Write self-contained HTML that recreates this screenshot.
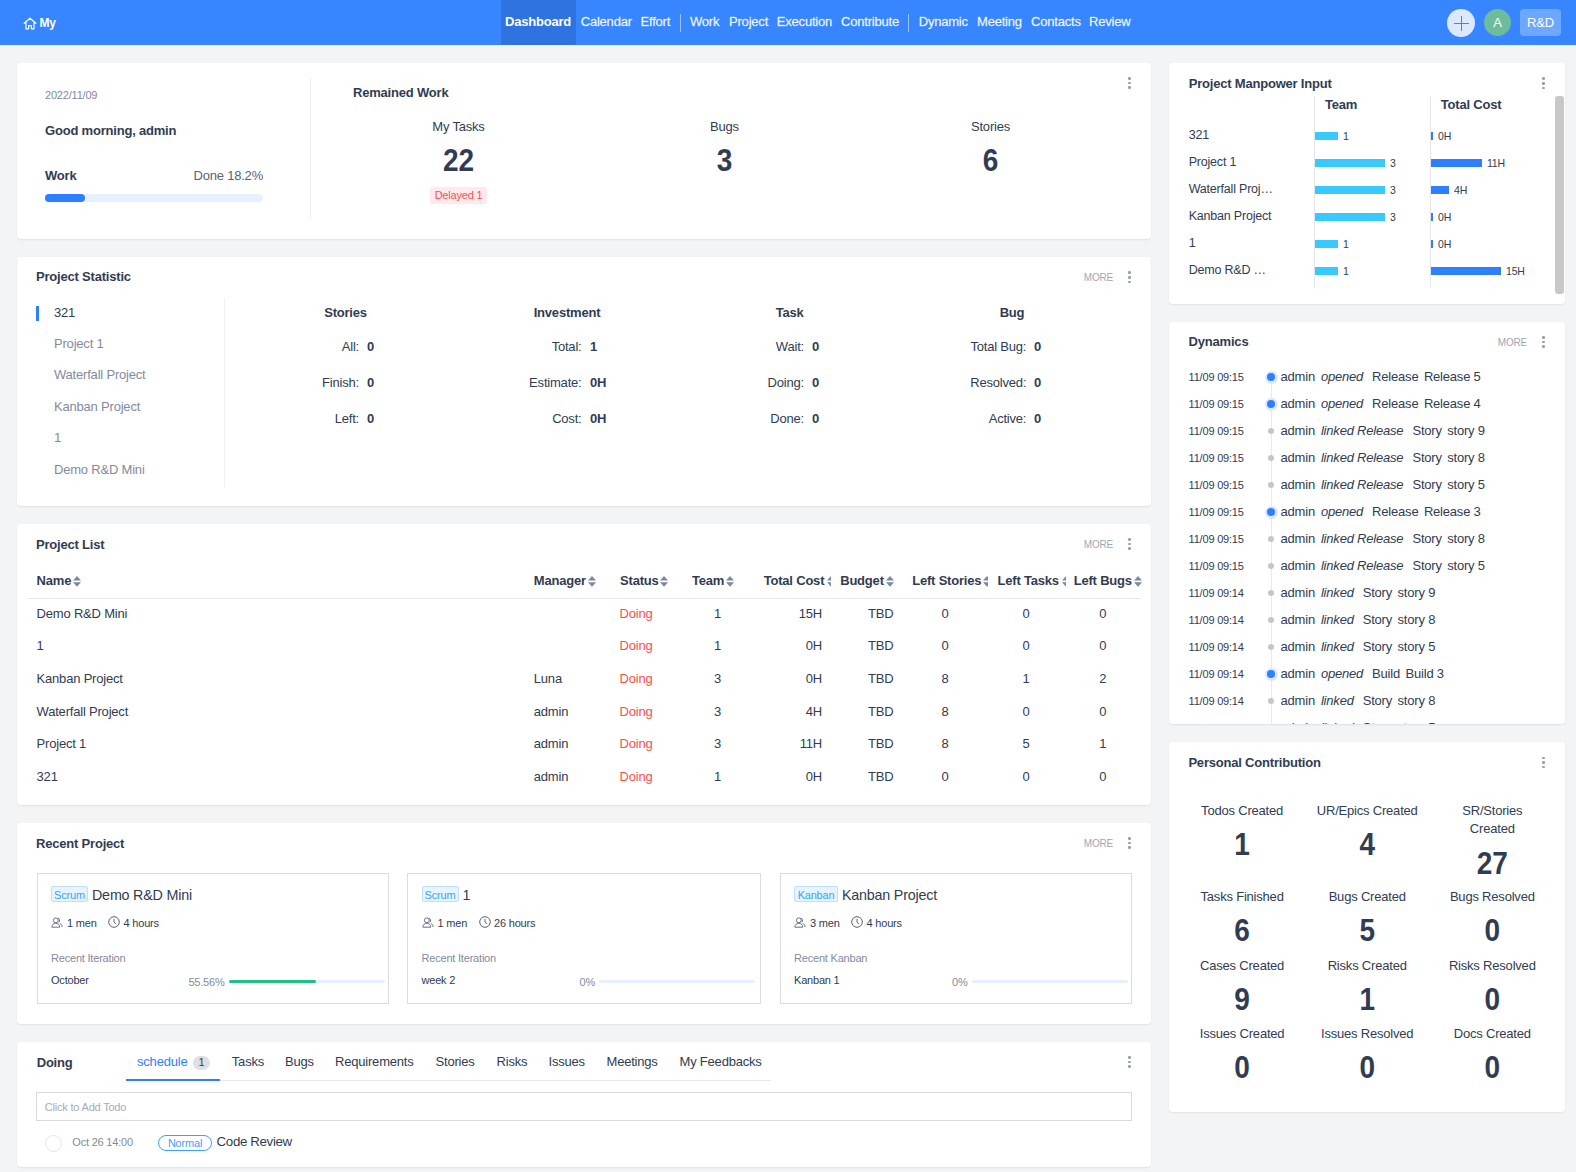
<!DOCTYPE html>
<html><head><meta charset="utf-8"><title>Dashboard</title>
<style>
html,body{margin:0;padding:0;}
body{width:1576px;height:1172px;overflow:hidden;position:relative;background:#f3f4f6;font-family:"Liberation Sans",sans-serif;color:#313c52;letter-spacing:-0.2px;}
.big{letter-spacing:0;transform:scaleY(1.1);}
.a{position:absolute;white-space:nowrap;}
i{font-style:italic;}
</style></head><body>
<div class="a" style="left:0px;top:0px;width:1576px;height:45px;background:#3785ff;"></div>
<div class="a" style="left:501px;top:0px;width:75px;height:45px;background:#2f73e0;"></div>
<svg class="a" style="left:23px;top:17px" width="14" height="13" viewBox="0 0 14 13"><path d="M1.2 6.3 L7 1.2 L12.8 6.3 M3 5 V11.8 H5.6 V8.6 H8.4 V11.8 H11 V5" fill="none" stroke="#fff" stroke-width="1.2" stroke-linejoin="round" stroke-linecap="round"/></svg>
<div class="a" style="top:12.84px;font-size:12px;line-height:20px;color:#fff;font-weight:700;left:39.5px;">My</div>
<div class="a" style="top:11.50px;font-size:13px;line-height:20px;color:#fff;font-weight:700;left:505px;">Dashboard</div>
<div class="a" style="top:11.50px;font-size:13px;line-height:20px;color:#f0f5ff;left:580.7px;-webkit-text-stroke:0.3px rgba(240,245,255,.7);">Calendar</div>
<div class="a" style="top:11.50px;font-size:13px;line-height:20px;color:#f0f5ff;left:640.5px;-webkit-text-stroke:0.3px rgba(240,245,255,.7);">Effort</div>
<div class="a" style="top:11.50px;font-size:13px;line-height:20px;color:#f0f5ff;left:690px;-webkit-text-stroke:0.3px rgba(240,245,255,.7);">Work</div>
<div class="a" style="top:11.50px;font-size:13px;line-height:20px;color:#f0f5ff;left:729px;-webkit-text-stroke:0.3px rgba(240,245,255,.7);">Project</div>
<div class="a" style="top:11.50px;font-size:13px;line-height:20px;color:#f0f5ff;left:776.8px;-webkit-text-stroke:0.3px rgba(240,245,255,.7);">Execution</div>
<div class="a" style="top:11.50px;font-size:13px;line-height:20px;color:#f0f5ff;left:841px;-webkit-text-stroke:0.3px rgba(240,245,255,.7);">Contribute</div>
<div class="a" style="top:11.50px;font-size:13px;line-height:20px;color:#f0f5ff;left:918.7px;-webkit-text-stroke:0.3px rgba(240,245,255,.7);">Dynamic</div>
<div class="a" style="top:11.50px;font-size:13px;line-height:20px;color:#f0f5ff;left:977px;-webkit-text-stroke:0.3px rgba(240,245,255,.7);">Meeting</div>
<div class="a" style="top:11.50px;font-size:13px;line-height:20px;color:#f0f5ff;left:1031px;-webkit-text-stroke:0.3px rgba(240,245,255,.7);">Contacts</div>
<div class="a" style="top:11.50px;font-size:13px;line-height:20px;color:#f0f5ff;left:1089px;-webkit-text-stroke:0.3px rgba(240,245,255,.7);">Review</div>
<div class="a" style="left:680px;top:14px;width:1px;height:18px;background:rgba(255,255,255,.5);"></div>
<div class="a" style="left:908px;top:14px;width:1px;height:18px;background:rgba(255,255,255,.5);"></div>
<div class="a" style="left:1447px;top:9px;width:28px;height:28px;background:#dbe8ff;border-radius:50%;"></div>
<div class="a" style="left:1454px;top:22.5px;width:14.5px;height:1.2px;background:#3785ff;"></div>
<div class="a" style="left:1460.6px;top:16px;width:1.2px;height:14.5px;background:#3785ff;"></div>
<div class="a" style="left:1484px;top:9px;width:27px;height:27px;background:#6dbc9b;border-radius:50%;"></div>
<div class="a" style="top:12.50px;font-size:13px;line-height:20px;color:#fff;left:1197.5px;width:600px;text-align:center;">A</div>
<div class="a" style="left:1520px;top:9px;width:41px;height:27px;background:rgba(255,255,255,.28);border-radius:4px;"></div>
<div class="a" style="top:12.50px;font-size:13px;line-height:20px;color:#fff;left:1240.5px;width:600px;text-align:center;">R&amp;D</div>
<div class="a" style="left:17px;top:63px;width:1134px;height:176px;background:#fff;border-radius:4px;box-shadow:0 1px 2px rgba(0,0,0,.08);"></div>
<div class="a" style="top:85.19px;font-size:11px;line-height:20px;color:#838a9d;left:45px;">2022/11/09</div>
<div class="a" style="top:120.50px;font-size:13px;line-height:20px;color:#313c52;font-weight:700;left:45px;">Good morning, admin</div>
<div class="a" style="top:165.50px;font-size:13px;line-height:20px;color:#313c52;font-weight:700;left:45px;">Work</div>
<div class="a" style="top:165.50px;font-size:13px;line-height:20px;color:#5a6275;left:-337px;width:600px;text-align:right;">Done 18.2%</div>
<div class="a" style="left:45px;top:194px;width:218px;height:8px;background:#e6f0ff;border-radius:4px;"></div>
<div class="a" style="left:45px;top:194px;width:40px;height:8px;background:#2e7fff;border-radius:4px;"></div>
<div class="a" style="left:310px;top:78px;width:1px;height:142px;background:#eceef2;"></div>
<div class="a" style="top:82.50px;font-size:13px;line-height:20px;color:#313c52;font-weight:700;left:353px;">Remained Work</div>
<div class="a" style="left:1128.25px;top:77.15px;width:2.5px;height:2.5px;background:#979eb0;border-radius:50%;"></div>
<div class="a" style="left:1128.25px;top:81.75px;width:2.5px;height:2.5px;background:#979eb0;border-radius:50%;"></div>
<div class="a" style="left:1128.25px;top:86.35px;width:2.5px;height:2.5px;background:#979eb0;border-radius:50%;"></div>
<div class="a" style="top:116.50px;font-size:13px;line-height:20px;color:#313c52;left:158.5px;width:600px;text-align:center;">My Tasks</div>
<div class="a" style="top:151.30px;font-size:28px;line-height:20px;color:#313c52;font-weight:700;left:158.5px;width:600px;text-align:center;letter-spacing:0;transform:scaleY(1.1);">22</div>
<div class="a" style="top:116.50px;font-size:13px;line-height:20px;color:#313c52;left:424.5px;width:600px;text-align:center;">Bugs</div>
<div class="a" style="top:151.30px;font-size:28px;line-height:20px;color:#313c52;font-weight:700;left:424.5px;width:600px;text-align:center;letter-spacing:0;transform:scaleY(1.1);">3</div>
<div class="a" style="top:116.50px;font-size:13px;line-height:20px;color:#313c52;left:690.5px;width:600px;text-align:center;">Stories</div>
<div class="a" style="top:151.30px;font-size:28px;line-height:20px;color:#313c52;font-weight:700;left:690.5px;width:600px;text-align:center;letter-spacing:0;transform:scaleY(1.1);">6</div>
<div class="a" style="left:430px;top:187px;width:57px;height:17px;background:#ffe9ec;border-radius:2px;"></div>
<div class="a" style="top:185.19px;font-size:11px;line-height:20px;color:#ff4d4f;left:158.5px;width:600px;text-align:center;">Delayed 1</div>
<div class="a" style="left:17px;top:257px;width:1134px;height:249px;background:#fff;border-radius:4px;box-shadow:0 1px 2px rgba(0,0,0,.08);"></div>
<div class="a" style="top:266.50px;font-size:13px;line-height:20px;color:#313c52;font-weight:700;left:36px;">Project Statistic</div>
<div class="a" style="top:267.54px;font-size:10px;line-height:20px;color:#9ea6b8;left:513px;width:600px;text-align:right;">MORE</div>
<div class="a" style="left:1128.25px;top:271.45px;width:2.5px;height:2.5px;background:#979eb0;border-radius:50%;"></div>
<div class="a" style="left:1128.25px;top:276.05px;width:2.5px;height:2.5px;background:#979eb0;border-radius:50%;"></div>
<div class="a" style="left:1128.25px;top:280.65000000000003px;width:2.5px;height:2.5px;background:#979eb0;border-radius:50%;"></div>
<div class="a" style="left:36px;top:306px;width:3px;height:15px;background:#2e7fff;"></div>
<div class="a" style="top:302.50px;font-size:13px;line-height:20px;color:#313c52;left:54px;">321</div>
<div class="a" style="top:333.95px;font-size:13px;line-height:20px;color:#838a9d;left:54px;">Project 1</div>
<div class="a" style="top:365.40px;font-size:13px;line-height:20px;color:#838a9d;left:54px;">Waterfall Project</div>
<div class="a" style="top:396.85px;font-size:13px;line-height:20px;color:#838a9d;left:54px;">Kanban Project</div>
<div class="a" style="top:428.30px;font-size:13px;line-height:20px;color:#838a9d;left:54px;">1</div>
<div class="a" style="top:459.75px;font-size:13px;line-height:20px;color:#838a9d;left:54px;">Demo R&amp;D Mini</div>
<div class="a" style="left:224px;top:298px;width:1px;height:189px;background:#eef0f5;"></div>
<div class="a" style="top:302.50px;font-size:13px;line-height:20px;color:#313c52;font-weight:700;left:45.5px;width:600px;text-align:center;">Stories</div>
<div class="a" style="top:336.50px;font-size:13px;line-height:20px;color:#313c52;left:-241px;width:600px;text-align:right;">All:</div>
<div class="a" style="top:336.50px;font-size:13px;line-height:20px;color:#313c52;font-weight:700;left:367px;">0</div>
<div class="a" style="top:372.50px;font-size:13px;line-height:20px;color:#313c52;left:-241px;width:600px;text-align:right;">Finish:</div>
<div class="a" style="top:372.50px;font-size:13px;line-height:20px;color:#313c52;font-weight:700;left:367px;">0</div>
<div class="a" style="top:408.50px;font-size:13px;line-height:20px;color:#313c52;left:-241px;width:600px;text-align:right;">Left:</div>
<div class="a" style="top:408.50px;font-size:13px;line-height:20px;color:#313c52;font-weight:700;left:367px;">0</div>
<div class="a" style="top:302.50px;font-size:13px;line-height:20px;color:#313c52;font-weight:700;left:267px;width:600px;text-align:center;">Investment</div>
<div class="a" style="top:336.50px;font-size:13px;line-height:20px;color:#313c52;left:-18.5px;width:600px;text-align:right;">Total:</div>
<div class="a" style="top:336.50px;font-size:13px;line-height:20px;color:#313c52;font-weight:700;left:590px;">1</div>
<div class="a" style="top:372.50px;font-size:13px;line-height:20px;color:#313c52;left:-18.5px;width:600px;text-align:right;">Estimate:</div>
<div class="a" style="top:372.50px;font-size:13px;line-height:20px;color:#313c52;font-weight:700;left:590px;">0H</div>
<div class="a" style="top:408.50px;font-size:13px;line-height:20px;color:#313c52;left:-18.5px;width:600px;text-align:right;">Cost:</div>
<div class="a" style="top:408.50px;font-size:13px;line-height:20px;color:#313c52;font-weight:700;left:590px;">0H</div>
<div class="a" style="top:302.50px;font-size:13px;line-height:20px;color:#313c52;font-weight:700;left:489.70000000000005px;width:600px;text-align:center;">Task</div>
<div class="a" style="top:336.50px;font-size:13px;line-height:20px;color:#313c52;left:204px;width:600px;text-align:right;">Wait:</div>
<div class="a" style="top:336.50px;font-size:13px;line-height:20px;color:#313c52;font-weight:700;left:812px;">0</div>
<div class="a" style="top:372.50px;font-size:13px;line-height:20px;color:#313c52;left:204px;width:600px;text-align:right;">Doing:</div>
<div class="a" style="top:372.50px;font-size:13px;line-height:20px;color:#313c52;font-weight:700;left:812px;">0</div>
<div class="a" style="top:408.50px;font-size:13px;line-height:20px;color:#313c52;left:204px;width:600px;text-align:right;">Done:</div>
<div class="a" style="top:408.50px;font-size:13px;line-height:20px;color:#313c52;font-weight:700;left:812px;">0</div>
<div class="a" style="top:302.50px;font-size:13px;line-height:20px;color:#313c52;font-weight:700;left:712px;width:600px;text-align:center;">Bug</div>
<div class="a" style="top:336.50px;font-size:13px;line-height:20px;color:#313c52;left:426.29999999999995px;width:600px;text-align:right;">Total Bug:</div>
<div class="a" style="top:336.50px;font-size:13px;line-height:20px;color:#313c52;font-weight:700;left:1034px;">0</div>
<div class="a" style="top:372.50px;font-size:13px;line-height:20px;color:#313c52;left:426.29999999999995px;width:600px;text-align:right;">Resolved:</div>
<div class="a" style="top:372.50px;font-size:13px;line-height:20px;color:#313c52;font-weight:700;left:1034px;">0</div>
<div class="a" style="top:408.50px;font-size:13px;line-height:20px;color:#313c52;left:426.29999999999995px;width:600px;text-align:right;">Active:</div>
<div class="a" style="top:408.50px;font-size:13px;line-height:20px;color:#313c52;font-weight:700;left:1034px;">0</div>
<div class="a" style="left:17px;top:524px;width:1134px;height:281px;background:#fff;border-radius:4px;box-shadow:0 1px 2px rgba(0,0,0,.08);"></div>
<div class="a" style="top:534.50px;font-size:13px;line-height:20px;color:#313c52;font-weight:700;left:36px;">Project List</div>
<div class="a" style="top:534.53px;font-size:10px;line-height:20px;color:#9ea6b8;left:513px;width:600px;text-align:right;">MORE</div>
<div class="a" style="left:1128.25px;top:538.15px;width:2.5px;height:2.5px;background:#979eb0;border-radius:50%;"></div>
<div class="a" style="left:1128.25px;top:542.75px;width:2.5px;height:2.5px;background:#979eb0;border-radius:50%;"></div>
<div class="a" style="left:1128.25px;top:547.35px;width:2.5px;height:2.5px;background:#979eb0;border-radius:50%;"></div>
<div class="a" style="top:570.50px;font-size:13px;line-height:20px;color:#313c52;font-weight:700;left:36.6px;">Name</div>
<svg class="a" style="left:73px;top:576px" width="8" height="11" viewBox="0 0 8 11"><path d="M0 4.4 L4 0 L8 4.4 Z M0 6.2 L4 10.8 L8 6.2 Z" fill="#7f879b"/></svg>
<div class="a" style="top:570.50px;font-size:13px;line-height:20px;color:#313c52;font-weight:700;left:533.8px;">Manager</div>
<svg class="a" style="left:588px;top:576px" width="8" height="11" viewBox="0 0 8 11"><path d="M0 4.4 L4 0 L8 4.4 Z M0 6.2 L4 10.8 L8 6.2 Z" fill="#7f879b"/></svg>
<div class="a" style="top:570.50px;font-size:13px;line-height:20px;color:#313c52;font-weight:700;left:620.1px;">Status</div>
<svg class="a" style="left:660px;top:576px" width="8" height="11" viewBox="0 0 8 11"><path d="M0 4.4 L4 0 L8 4.4 Z M0 6.2 L4 10.8 L8 6.2 Z" fill="#7f879b"/></svg>
<div class="a" style="top:570.50px;font-size:13px;line-height:20px;color:#313c52;font-weight:700;left:692px;">Team</div>
<svg class="a" style="left:726px;top:576px" width="8" height="11" viewBox="0 0 8 11"><path d="M0 4.4 L4 0 L8 4.4 Z M0 6.2 L4 10.8 L8 6.2 Z" fill="#7f879b"/></svg>
<div class="a" style="top:570.50px;font-size:13px;line-height:20px;color:#313c52;font-weight:700;left:763.7px;">Total Cost</div>
<svg class="a" style="left:826.5px;top:576px" width="4.5" height="11" viewBox="0 0 4.5 11"><path d="M0 4.4 L4 0 L8 4.4 Z M0 6.2 L4 10.8 L8 6.2 Z" fill="#7f879b"/></svg>
<div class="a" style="top:570.50px;font-size:13px;line-height:20px;color:#313c52;font-weight:700;left:840.2px;">Budget</div>
<svg class="a" style="left:886px;top:576px" width="8" height="11" viewBox="0 0 8 11"><path d="M0 4.4 L4 0 L8 4.4 Z M0 6.2 L4 10.8 L8 6.2 Z" fill="#7f879b"/></svg>
<div class="a" style="top:570.50px;font-size:13px;line-height:20px;color:#313c52;font-weight:700;left:912.2px;">Left Stories</div>
<svg class="a" style="left:983px;top:576px" width="4.5" height="11" viewBox="0 0 4.5 11"><path d="M0 4.4 L4 0 L8 4.4 Z M0 6.2 L4 10.8 L8 6.2 Z" fill="#7f879b"/></svg>
<div class="a" style="top:570.50px;font-size:13px;line-height:20px;color:#313c52;font-weight:700;left:997.5px;">Left Tasks</div>
<svg class="a" style="left:1061.5px;top:576px" width="4.5" height="11" viewBox="0 0 4.5 11"><path d="M0 4.4 L4 0 L8 4.4 Z M0 6.2 L4 10.8 L8 6.2 Z" fill="#7f879b"/></svg>
<div class="a" style="top:570.50px;font-size:13px;line-height:20px;color:#313c52;font-weight:700;left:1073.7px;">Left Bugs</div>
<svg class="a" style="left:1133.5px;top:576px" width="8" height="11" viewBox="0 0 8 11"><path d="M0 4.4 L4 0 L8 4.4 Z M0 6.2 L4 10.8 L8 6.2 Z" fill="#7f879b"/></svg>
<div class="a" style="left:27px;top:598px;width:1114px;height:1px;background:#e6e8ec;"></div>
<div class="a" style="top:603.80px;font-size:13px;line-height:20px;color:#313c52;left:36.6px;">Demo R&amp;D Mini</div>
<div class="a" style="top:603.80px;font-size:13px;line-height:20px;color:#313c52;left:533.8px;"></div>
<div class="a" style="top:603.80px;font-size:13px;line-height:20px;color:#ff4d4f;left:619.5px;">Doing</div>
<div class="a" style="top:603.80px;font-size:13px;line-height:20px;color:#313c52;left:417.5px;width:600px;text-align:center;">1</div>
<div class="a" style="top:603.80px;font-size:13px;line-height:20px;color:#313c52;left:222px;width:600px;text-align:right;">15H</div>
<div class="a" style="top:603.80px;font-size:13px;line-height:20px;color:#313c52;left:293.5px;width:600px;text-align:right;">TBD</div>
<div class="a" style="top:603.80px;font-size:13px;line-height:20px;color:#313c52;left:645px;width:600px;text-align:center;">0</div>
<div class="a" style="top:603.80px;font-size:13px;line-height:20px;color:#313c52;left:726px;width:600px;text-align:center;">0</div>
<div class="a" style="top:603.80px;font-size:13px;line-height:20px;color:#313c52;left:802.7px;width:600px;text-align:center;">0</div>
<div class="a" style="top:636.40px;font-size:13px;line-height:20px;color:#313c52;left:36.6px;">1</div>
<div class="a" style="top:636.40px;font-size:13px;line-height:20px;color:#313c52;left:533.8px;"></div>
<div class="a" style="top:636.40px;font-size:13px;line-height:20px;color:#ff4d4f;left:619.5px;">Doing</div>
<div class="a" style="top:636.40px;font-size:13px;line-height:20px;color:#313c52;left:417.5px;width:600px;text-align:center;">1</div>
<div class="a" style="top:636.40px;font-size:13px;line-height:20px;color:#313c52;left:222px;width:600px;text-align:right;">0H</div>
<div class="a" style="top:636.40px;font-size:13px;line-height:20px;color:#313c52;left:293.5px;width:600px;text-align:right;">TBD</div>
<div class="a" style="top:636.40px;font-size:13px;line-height:20px;color:#313c52;left:645px;width:600px;text-align:center;">0</div>
<div class="a" style="top:636.40px;font-size:13px;line-height:20px;color:#313c52;left:726px;width:600px;text-align:center;">0</div>
<div class="a" style="top:636.40px;font-size:13px;line-height:20px;color:#313c52;left:802.7px;width:600px;text-align:center;">0</div>
<div class="a" style="top:669.00px;font-size:13px;line-height:20px;color:#313c52;left:36.6px;">Kanban Project</div>
<div class="a" style="top:669.00px;font-size:13px;line-height:20px;color:#313c52;left:533.8px;">Luna</div>
<div class="a" style="top:669.00px;font-size:13px;line-height:20px;color:#ff4d4f;left:619.5px;">Doing</div>
<div class="a" style="top:669.00px;font-size:13px;line-height:20px;color:#313c52;left:417.5px;width:600px;text-align:center;">3</div>
<div class="a" style="top:669.00px;font-size:13px;line-height:20px;color:#313c52;left:222px;width:600px;text-align:right;">0H</div>
<div class="a" style="top:669.00px;font-size:13px;line-height:20px;color:#313c52;left:293.5px;width:600px;text-align:right;">TBD</div>
<div class="a" style="top:669.00px;font-size:13px;line-height:20px;color:#313c52;left:645px;width:600px;text-align:center;">8</div>
<div class="a" style="top:669.00px;font-size:13px;line-height:20px;color:#313c52;left:726px;width:600px;text-align:center;">1</div>
<div class="a" style="top:669.00px;font-size:13px;line-height:20px;color:#313c52;left:802.7px;width:600px;text-align:center;">2</div>
<div class="a" style="top:701.60px;font-size:13px;line-height:20px;color:#313c52;left:36.6px;">Waterfall Project</div>
<div class="a" style="top:701.60px;font-size:13px;line-height:20px;color:#313c52;left:533.8px;">admin</div>
<div class="a" style="top:701.60px;font-size:13px;line-height:20px;color:#ff4d4f;left:619.5px;">Doing</div>
<div class="a" style="top:701.60px;font-size:13px;line-height:20px;color:#313c52;left:417.5px;width:600px;text-align:center;">3</div>
<div class="a" style="top:701.60px;font-size:13px;line-height:20px;color:#313c52;left:222px;width:600px;text-align:right;">4H</div>
<div class="a" style="top:701.60px;font-size:13px;line-height:20px;color:#313c52;left:293.5px;width:600px;text-align:right;">TBD</div>
<div class="a" style="top:701.60px;font-size:13px;line-height:20px;color:#313c52;left:645px;width:600px;text-align:center;">8</div>
<div class="a" style="top:701.60px;font-size:13px;line-height:20px;color:#313c52;left:726px;width:600px;text-align:center;">0</div>
<div class="a" style="top:701.60px;font-size:13px;line-height:20px;color:#313c52;left:802.7px;width:600px;text-align:center;">0</div>
<div class="a" style="top:734.20px;font-size:13px;line-height:20px;color:#313c52;left:36.6px;">Project 1</div>
<div class="a" style="top:734.20px;font-size:13px;line-height:20px;color:#313c52;left:533.8px;">admin</div>
<div class="a" style="top:734.20px;font-size:13px;line-height:20px;color:#ff4d4f;left:619.5px;">Doing</div>
<div class="a" style="top:734.20px;font-size:13px;line-height:20px;color:#313c52;left:417.5px;width:600px;text-align:center;">3</div>
<div class="a" style="top:734.20px;font-size:13px;line-height:20px;color:#313c52;left:222px;width:600px;text-align:right;">11H</div>
<div class="a" style="top:734.20px;font-size:13px;line-height:20px;color:#313c52;left:293.5px;width:600px;text-align:right;">TBD</div>
<div class="a" style="top:734.20px;font-size:13px;line-height:20px;color:#313c52;left:645px;width:600px;text-align:center;">8</div>
<div class="a" style="top:734.20px;font-size:13px;line-height:20px;color:#313c52;left:726px;width:600px;text-align:center;">5</div>
<div class="a" style="top:734.20px;font-size:13px;line-height:20px;color:#313c52;left:802.7px;width:600px;text-align:center;">1</div>
<div class="a" style="top:766.80px;font-size:13px;line-height:20px;color:#313c52;left:36.6px;">321</div>
<div class="a" style="top:766.80px;font-size:13px;line-height:20px;color:#313c52;left:533.8px;">admin</div>
<div class="a" style="top:766.80px;font-size:13px;line-height:20px;color:#ff4d4f;left:619.5px;">Doing</div>
<div class="a" style="top:766.80px;font-size:13px;line-height:20px;color:#313c52;left:417.5px;width:600px;text-align:center;">1</div>
<div class="a" style="top:766.80px;font-size:13px;line-height:20px;color:#313c52;left:222px;width:600px;text-align:right;">0H</div>
<div class="a" style="top:766.80px;font-size:13px;line-height:20px;color:#313c52;left:293.5px;width:600px;text-align:right;">TBD</div>
<div class="a" style="top:766.80px;font-size:13px;line-height:20px;color:#313c52;left:645px;width:600px;text-align:center;">0</div>
<div class="a" style="top:766.80px;font-size:13px;line-height:20px;color:#313c52;left:726px;width:600px;text-align:center;">0</div>
<div class="a" style="top:766.80px;font-size:13px;line-height:20px;color:#313c52;left:802.7px;width:600px;text-align:center;">0</div>
<div class="a" style="left:17px;top:823px;width:1134px;height:201px;background:#fff;border-radius:4px;box-shadow:0 1px 2px rgba(0,0,0,.08);"></div>
<div class="a" style="top:833.50px;font-size:13px;line-height:20px;color:#313c52;font-weight:700;left:36px;">Recent Project</div>
<div class="a" style="top:833.53px;font-size:10px;line-height:20px;color:#9ea6b8;left:513px;width:600px;text-align:right;">MORE</div>
<div class="a" style="left:1128.25px;top:837.15px;width:2.5px;height:2.5px;background:#979eb0;border-radius:50%;"></div>
<div class="a" style="left:1128.25px;top:841.75px;width:2.5px;height:2.5px;background:#979eb0;border-radius:50%;"></div>
<div class="a" style="left:1128.25px;top:846.35px;width:2.5px;height:2.5px;background:#979eb0;border-radius:50%;"></div>
<div class="a" style="left:36.5px;top:873px;width:352px;height:131px;border:1px solid #dcdcdc;box-sizing:border-box;"></div>
<div class="a" style="left:51.0px;top:886px;width:37px;height:16px;background:#e6f4ff;border:1px solid #bde0ff;box-sizing:border-box;border-radius:2px;"></div>
<div class="a" style="top:884.69px;font-size:11px;line-height:20px;color:#3ba1ff;left:-230.5px;width:600px;text-align:center;">Scrum</div>
<div class="a" style="top:885.05px;font-size:14.3px;line-height:20px;color:#313c52;left:92.0px;">Demo R&amp;D Mini</div>
<svg class="a" style="left:51.0px;top:916.8px" width="12" height="11" viewBox="0 0 12 11"><circle cx="4.8" cy="3.3" r="2.4" fill="none" stroke="#5a6275" stroke-width="0.9"/><path d="M0.9 10.2 C0.9 7.6 2.6 6.3 4.8 6.3 C7 6.3 8.7 7.6 8.7 10.2 Z" fill="none" stroke="#5a6275" stroke-width="0.9"/><path d="M6.9 1.1 C8.6 1.2 9.3 3.9 7.6 5.4" fill="none" stroke="#5a6275" stroke-width="0.9"/><path d="M8.7 6.4 C10.2 7 11.1 8.3 11.1 10" fill="none" stroke="#5a6275" stroke-width="0.9"/></svg>
<div class="a" style="top:912.99px;font-size:11px;line-height:20px;color:#313c52;left:67.0px;">1 men</div>
<svg class="a" style="left:108.39375px;top:916px" width="12" height="12" viewBox="0 0 12 12"><circle cx="6" cy="6" r="5.3" fill="none" stroke="#5a6275" stroke-width="1"/><path d="M6 2.8 V6.2 L8.2 8" fill="none" stroke="#5a6275" stroke-width="1"/></svg>
<div class="a" style="top:912.99px;font-size:11px;line-height:20px;color:#313c52;left:123.59375px;">4 hours</div>
<div class="a" style="top:948.19px;font-size:11px;line-height:20px;color:#838a9d;left:51.0px;">Recent Iteration</div>
<div class="a" style="top:970.19px;font-size:11px;line-height:20px;color:#313c52;left:51.0px;">October</div>
<div class="a" style="top:972.19px;font-size:11px;line-height:20px;color:#838a9d;left:-375.5px;width:600px;text-align:right;">55.56%</div>
<div class="a" style="left:228.5px;top:980px;width:156px;height:3px;background:#e6f0ff;border-radius:2px;"></div>
<div class="a" style="left:228.5px;top:980px;width:87px;height:3px;background:#1fc187;border-radius:2px;"></div>
<div class="a" style="left:407px;top:873px;width:354px;height:131px;border:1px solid #dcdcdc;box-sizing:border-box;"></div>
<div class="a" style="left:421.5px;top:886px;width:37px;height:16px;background:#e6f4ff;border:1px solid #bde0ff;box-sizing:border-box;border-radius:2px;"></div>
<div class="a" style="top:884.69px;font-size:11px;line-height:20px;color:#3ba1ff;left:140.0px;width:600px;text-align:center;">Scrum</div>
<div class="a" style="top:885.05px;font-size:14.3px;line-height:20px;color:#313c52;left:462.5px;">1</div>
<svg class="a" style="left:421.5px;top:916.8px" width="12" height="11" viewBox="0 0 12 11"><circle cx="4.8" cy="3.3" r="2.4" fill="none" stroke="#5a6275" stroke-width="0.9"/><path d="M0.9 10.2 C0.9 7.6 2.6 6.3 4.8 6.3 C7 6.3 8.7 7.6 8.7 10.2 Z" fill="none" stroke="#5a6275" stroke-width="0.9"/><path d="M6.9 1.1 C8.6 1.2 9.3 3.9 7.6 5.4" fill="none" stroke="#5a6275" stroke-width="0.9"/><path d="M8.7 6.4 C10.2 7 11.1 8.3 11.1 10" fill="none" stroke="#5a6275" stroke-width="0.9"/></svg>
<div class="a" style="top:912.99px;font-size:11px;line-height:20px;color:#313c52;left:437.5px;">1 men</div>
<svg class="a" style="left:478.89375px;top:916px" width="12" height="12" viewBox="0 0 12 12"><circle cx="6" cy="6" r="5.3" fill="none" stroke="#5a6275" stroke-width="1"/><path d="M6 2.8 V6.2 L8.2 8" fill="none" stroke="#5a6275" stroke-width="1"/></svg>
<div class="a" style="top:912.99px;font-size:11px;line-height:20px;color:#313c52;left:494.09375px;">26 hours</div>
<div class="a" style="top:948.19px;font-size:11px;line-height:20px;color:#838a9d;left:421.5px;">Recent Iteration</div>
<div class="a" style="top:970.19px;font-size:11px;line-height:20px;color:#313c52;left:421.5px;">week 2</div>
<div class="a" style="top:972.19px;font-size:11px;line-height:20px;color:#838a9d;left:-5px;width:600px;text-align:right;">0%</div>
<div class="a" style="left:599px;top:980px;width:156px;height:3px;background:#e6f0ff;border-radius:2px;"></div>
<div class="a" style="left:779.5px;top:873px;width:352px;height:131px;border:1px solid #dcdcdc;box-sizing:border-box;"></div>
<div class="a" style="left:794.0px;top:886px;width:44px;height:16px;background:#e6f4ff;border:1px solid #bde0ff;box-sizing:border-box;border-radius:2px;"></div>
<div class="a" style="top:884.69px;font-size:11px;line-height:20px;color:#3ba1ff;left:516.0px;width:600px;text-align:center;">Kanban</div>
<div class="a" style="top:885.05px;font-size:14.3px;line-height:20px;color:#313c52;left:842.0px;">Kanban Project</div>
<svg class="a" style="left:794.0px;top:916.8px" width="12" height="11" viewBox="0 0 12 11"><circle cx="4.8" cy="3.3" r="2.4" fill="none" stroke="#5a6275" stroke-width="0.9"/><path d="M0.9 10.2 C0.9 7.6 2.6 6.3 4.8 6.3 C7 6.3 8.7 7.6 8.7 10.2 Z" fill="none" stroke="#5a6275" stroke-width="0.9"/><path d="M6.9 1.1 C8.6 1.2 9.3 3.9 7.6 5.4" fill="none" stroke="#5a6275" stroke-width="0.9"/><path d="M8.7 6.4 C10.2 7 11.1 8.3 11.1 10" fill="none" stroke="#5a6275" stroke-width="0.9"/></svg>
<div class="a" style="top:912.99px;font-size:11px;line-height:20px;color:#313c52;left:810.0px;">3 men</div>
<svg class="a" style="left:851.39375px;top:916px" width="12" height="12" viewBox="0 0 12 12"><circle cx="6" cy="6" r="5.3" fill="none" stroke="#5a6275" stroke-width="1"/><path d="M6 2.8 V6.2 L8.2 8" fill="none" stroke="#5a6275" stroke-width="1"/></svg>
<div class="a" style="top:912.99px;font-size:11px;line-height:20px;color:#313c52;left:866.59375px;">4 hours</div>
<div class="a" style="top:948.19px;font-size:11px;line-height:20px;color:#838a9d;left:794.0px;">Recent Kanban</div>
<div class="a" style="top:970.19px;font-size:11px;line-height:20px;color:#313c52;left:794.0px;">Kanban 1</div>
<div class="a" style="top:972.19px;font-size:11px;line-height:20px;color:#838a9d;left:367.5px;width:600px;text-align:right;">0%</div>
<div class="a" style="left:971.5px;top:980px;width:156px;height:3px;background:#e6f0ff;border-radius:2px;"></div>
<div class="a" style="left:17px;top:1042px;width:1134px;height:125px;background:#fff;border-radius:4px;box-shadow:0 1px 2px rgba(0,0,0,.08);"></div>
<div class="a" style="top:1053.00px;font-size:13px;line-height:20px;color:#313c52;font-weight:700;left:36.7px;">Doing</div>
<div class="a" style="left:1128.25px;top:1056.15px;width:2.5px;height:2.5px;background:#979eb0;border-radius:50%;"></div>
<div class="a" style="left:1128.25px;top:1060.75px;width:2.5px;height:2.5px;background:#979eb0;border-radius:50%;"></div>
<div class="a" style="left:1128.25px;top:1065.35px;width:2.5px;height:2.5px;background:#979eb0;border-radius:50%;"></div>
<div class="a" style="left:126px;top:1080px;width:645px;height:1px;background:#e6e8ec;"></div>
<div class="a" style="left:126px;top:1079px;width:94px;height:2px;background:#2e7fff;"></div>
<div class="a" style="top:1051.50px;font-size:13px;line-height:20px;color:#2e7fff;left:137px;">schedule</div>
<div class="a" style="left:193px;top:1055.5px;width:17px;height:14px;background:#dedfe3;border-radius:7px;"></div>
<div class="a" style="top:1052.19px;font-size:11px;line-height:20px;color:#313c52;left:-98.5px;width:600px;text-align:center;">1</div>
<div class="a" style="top:1051.50px;font-size:13px;line-height:20px;color:#313c52;left:231.8px;">Tasks</div>
<div class="a" style="top:1051.50px;font-size:13px;line-height:20px;color:#313c52;left:285px;">Bugs</div>
<div class="a" style="top:1051.50px;font-size:13px;line-height:20px;color:#313c52;left:335px;">Requirements</div>
<div class="a" style="top:1051.50px;font-size:13px;line-height:20px;color:#313c52;left:435.5px;">Stories</div>
<div class="a" style="top:1051.50px;font-size:13px;line-height:20px;color:#313c52;left:496.5px;">Risks</div>
<div class="a" style="top:1051.50px;font-size:13px;line-height:20px;color:#313c52;left:548.5px;">Issues</div>
<div class="a" style="top:1051.50px;font-size:13px;line-height:20px;color:#313c52;left:606.5px;">Meetings</div>
<div class="a" style="top:1051.50px;font-size:13px;line-height:20px;color:#313c52;left:679.5px;">My Feedbacks</div>
<div class="a" style="left:36px;top:1092px;width:1096px;height:29px;border:1px solid #dadada;box-sizing:border-box;background:#fff;"></div>
<div class="a" style="top:1097.19px;font-size:11px;line-height:20px;color:#a5abb8;left:44.8px;">Click to Add Todo</div>
<div class="a" style="left:45px;top:1135px;width:17px;height:17px;border:1px solid #e3e5ea;border-radius:50%;box-sizing:border-box;"></div>
<div class="a" style="top:1132.19px;font-size:11px;line-height:20px;color:#838a9d;left:72.3px;">Oct 26 14:00</div>
<div class="a" style="left:158px;top:1135px;width:54px;height:16px;border:1px solid #3ba1ff;border-radius:8px;box-sizing:border-box;"></div>
<div class="a" style="top:1133.19px;font-size:11px;line-height:20px;color:#3ba1ff;left:-115px;width:600px;text-align:center;">Normal</div>
<div class="a" style="top:1132.39px;font-size:13.3px;line-height:20px;color:#313c52;letter-spacing:-0.35px;left:216.6px;">Code Review</div>
<div class="a" style="left:1169px;top:63px;width:396px;height:241px;background:#fff;border-radius:4px;box-shadow:0 1px 2px rgba(0,0,0,.08);"></div>
<div class="a" style="top:73.50px;font-size:13px;line-height:20px;color:#313c52;font-weight:700;left:1188.7px;">Project Manpower Input</div>
<div class="a" style="left:1542.25px;top:77.45px;width:2.5px;height:2.5px;background:#979eb0;border-radius:50%;"></div>
<div class="a" style="left:1542.25px;top:82.05px;width:2.5px;height:2.5px;background:#979eb0;border-radius:50%;"></div>
<div class="a" style="left:1542.25px;top:86.64999999999999px;width:2.5px;height:2.5px;background:#979eb0;border-radius:50%;"></div>
<div class="a" style="left:1314px;top:96px;width:1px;height:191px;background:#e3e5ea;"></div>
<div class="a" style="left:1430px;top:96px;width:1px;height:191px;background:#e3e5ea;"></div>
<div class="a" style="top:94.50px;font-size:13px;line-height:20px;color:#313c52;font-weight:700;left:1325px;">Team</div>
<div class="a" style="top:94.50px;font-size:13px;line-height:20px;color:#313c52;font-weight:700;left:1440.8px;">Total Cost</div>
<div class="a" style="left:1555px;top:96px;width:9px;height:198px;background:#c8c8c8;border-radius:3px;"></div>
<div class="a" style="top:125.17px;font-size:12.5px;line-height:20px;color:#313c52;left:1188.7px;">321</div>
<div class="a" style="left:1315px;top:132px;width:23px;height:8px;background:#38c9ff;"></div>
<div class="a" style="top:126.36px;font-size:10.5px;line-height:20px;color:#313c52;left:1343px;">1</div>
<div class="a" style="left:1431px;top:132px;width:2px;height:8px;background:#2e7fff;"></div>
<div class="a" style="top:126.36px;font-size:10.5px;line-height:20px;color:#313c52;left:1438px;">0H</div>
<div class="a" style="top:152.17px;font-size:12.5px;line-height:20px;color:#313c52;left:1188.7px;">Project 1</div>
<div class="a" style="left:1315px;top:159px;width:70px;height:8px;background:#38c9ff;"></div>
<div class="a" style="top:153.36px;font-size:10.5px;line-height:20px;color:#313c52;left:1390px;">3</div>
<div class="a" style="left:1431px;top:159px;width:51px;height:8px;background:#2e7fff;"></div>
<div class="a" style="top:153.36px;font-size:10.5px;line-height:20px;color:#313c52;left:1487px;">11H</div>
<div class="a" style="top:179.17px;font-size:12.5px;line-height:20px;color:#313c52;left:1188.7px;">Waterfall Proj…</div>
<div class="a" style="left:1315px;top:186px;width:70px;height:8px;background:#38c9ff;"></div>
<div class="a" style="top:180.36px;font-size:10.5px;line-height:20px;color:#313c52;left:1390px;">3</div>
<div class="a" style="left:1431px;top:186px;width:18px;height:8px;background:#2e7fff;"></div>
<div class="a" style="top:180.36px;font-size:10.5px;line-height:20px;color:#313c52;left:1454px;">4H</div>
<div class="a" style="top:206.17px;font-size:12.5px;line-height:20px;color:#313c52;left:1188.7px;">Kanban Project</div>
<div class="a" style="left:1315px;top:213px;width:70px;height:8px;background:#38c9ff;"></div>
<div class="a" style="top:207.36px;font-size:10.5px;line-height:20px;color:#313c52;left:1390px;">3</div>
<div class="a" style="left:1431px;top:213px;width:2px;height:8px;background:#2e7fff;"></div>
<div class="a" style="top:207.36px;font-size:10.5px;line-height:20px;color:#313c52;left:1438px;">0H</div>
<div class="a" style="top:233.17px;font-size:12.5px;line-height:20px;color:#313c52;left:1188.7px;">1</div>
<div class="a" style="left:1315px;top:240px;width:23px;height:8px;background:#38c9ff;"></div>
<div class="a" style="top:234.36px;font-size:10.5px;line-height:20px;color:#313c52;left:1343px;">1</div>
<div class="a" style="left:1431px;top:240px;width:2px;height:8px;background:#2e7fff;"></div>
<div class="a" style="top:234.36px;font-size:10.5px;line-height:20px;color:#313c52;left:1438px;">0H</div>
<div class="a" style="top:260.17px;font-size:12.5px;line-height:20px;color:#313c52;left:1188.7px;">Demo R&amp;D …</div>
<div class="a" style="left:1315px;top:267px;width:23px;height:8px;background:#38c9ff;"></div>
<div class="a" style="top:261.36px;font-size:10.5px;line-height:20px;color:#313c52;left:1343px;">1</div>
<div class="a" style="left:1431px;top:267px;width:70px;height:8px;background:#2e7fff;"></div>
<div class="a" style="top:261.36px;font-size:10.5px;line-height:20px;color:#313c52;left:1506px;">15H</div>
<div class="a" style="left:1169px;top:322px;width:396px;height:402px;background:#fff;border-radius:4px;box-shadow:0 1px 2px rgba(0,0,0,.08);"></div>
<div class="a" style="top:331.50px;font-size:13px;line-height:20px;color:#313c52;font-weight:700;left:1188.6px;">Dynamics</div>
<div class="a" style="top:332.54px;font-size:10px;line-height:20px;color:#9ea6b8;left:927px;width:600px;text-align:right;">MORE</div>
<div class="a" style="left:1542.25px;top:336.15px;width:2.5px;height:2.5px;background:#979eb0;border-radius:50%;"></div>
<div class="a" style="left:1542.25px;top:340.75px;width:2.5px;height:2.5px;background:#979eb0;border-radius:50%;"></div>
<div class="a" style="left:1542.25px;top:345.35px;width:2.5px;height:2.5px;background:#979eb0;border-radius:50%;"></div>
<div class="a" style="left:1169px;top:360px;width:396px;height:364px;overflow:hidden">
<div class="a" style="left:101.5px;top:17px;width:1px;height:361px;background:#e8e9ec;"></div>
<div class="a" style="top:7.19px;font-size:11px;line-height:20px;color:#313c52;left:19.59999999999991px;">11/09 09:15</div>
<div class="a" style="left:95.5px;top:10.5px;width:13px;height:13px;background:#d9e7ff;border-radius:50%;"></div>
<div class="a" style="left:98px;top:13px;width:8px;height:8px;background:#2e7fff;border-radius:50%;"></div>
<div class="a" style="top:6.50px;font-size:13px;line-height:20px;color:#313c52;left:111.5px;">admin<i style="margin-left:6px">opened</i><span style="margin-left:9px">Release</span><span style="margin-left:5.5px">Release 5</span></div>
<div class="a" style="top:34.19px;font-size:11px;line-height:20px;color:#313c52;left:19.59999999999991px;">11/09 09:15</div>
<div class="a" style="left:95.5px;top:37.5px;width:13px;height:13px;background:#d9e7ff;border-radius:50%;"></div>
<div class="a" style="left:98px;top:40px;width:8px;height:8px;background:#2e7fff;border-radius:50%;"></div>
<div class="a" style="top:33.50px;font-size:13px;line-height:20px;color:#313c52;left:111.5px;">admin<i style="margin-left:6px">opened</i><span style="margin-left:9px">Release</span><span style="margin-left:5.5px">Release 4</span></div>
<div class="a" style="top:61.19px;font-size:11px;line-height:20px;color:#313c52;left:19.59999999999991px;">11/09 09:15</div>
<div class="a" style="left:99px;top:68px;width:6px;height:6px;background:#c4c6cc;border-radius:50%;"></div>
<div class="a" style="top:60.50px;font-size:13px;line-height:20px;color:#313c52;left:111.5px;">admin<i style="margin-left:6px">linked Release</i><span style="margin-left:9px">Story</span><span style="margin-left:5.5px">story 9</span></div>
<div class="a" style="top:88.19px;font-size:11px;line-height:20px;color:#313c52;left:19.59999999999991px;">11/09 09:15</div>
<div class="a" style="left:99px;top:95px;width:6px;height:6px;background:#c4c6cc;border-radius:50%;"></div>
<div class="a" style="top:87.50px;font-size:13px;line-height:20px;color:#313c52;left:111.5px;">admin<i style="margin-left:6px">linked Release</i><span style="margin-left:9px">Story</span><span style="margin-left:5.5px">story 8</span></div>
<div class="a" style="top:115.19px;font-size:11px;line-height:20px;color:#313c52;left:19.59999999999991px;">11/09 09:15</div>
<div class="a" style="left:99px;top:122px;width:6px;height:6px;background:#c4c6cc;border-radius:50%;"></div>
<div class="a" style="top:114.50px;font-size:13px;line-height:20px;color:#313c52;left:111.5px;">admin<i style="margin-left:6px">linked Release</i><span style="margin-left:9px">Story</span><span style="margin-left:5.5px">story 5</span></div>
<div class="a" style="top:142.19px;font-size:11px;line-height:20px;color:#313c52;left:19.59999999999991px;">11/09 09:15</div>
<div class="a" style="left:95.5px;top:145.5px;width:13px;height:13px;background:#d9e7ff;border-radius:50%;"></div>
<div class="a" style="left:98px;top:148px;width:8px;height:8px;background:#2e7fff;border-radius:50%;"></div>
<div class="a" style="top:141.50px;font-size:13px;line-height:20px;color:#313c52;left:111.5px;">admin<i style="margin-left:6px">opened</i><span style="margin-left:9px">Release</span><span style="margin-left:5.5px">Release 3</span></div>
<div class="a" style="top:169.19px;font-size:11px;line-height:20px;color:#313c52;left:19.59999999999991px;">11/09 09:15</div>
<div class="a" style="left:99px;top:176px;width:6px;height:6px;background:#c4c6cc;border-radius:50%;"></div>
<div class="a" style="top:168.50px;font-size:13px;line-height:20px;color:#313c52;left:111.5px;">admin<i style="margin-left:6px">linked Release</i><span style="margin-left:9px">Story</span><span style="margin-left:5.5px">story 8</span></div>
<div class="a" style="top:196.19px;font-size:11px;line-height:20px;color:#313c52;left:19.59999999999991px;">11/09 09:15</div>
<div class="a" style="left:99px;top:203px;width:6px;height:6px;background:#c4c6cc;border-radius:50%;"></div>
<div class="a" style="top:195.50px;font-size:13px;line-height:20px;color:#313c52;left:111.5px;">admin<i style="margin-left:6px">linked Release</i><span style="margin-left:9px">Story</span><span style="margin-left:5.5px">story 5</span></div>
<div class="a" style="top:223.19px;font-size:11px;line-height:20px;color:#313c52;left:19.59999999999991px;">11/09 09:14</div>
<div class="a" style="left:99px;top:230px;width:6px;height:6px;background:#c4c6cc;border-radius:50%;"></div>
<div class="a" style="top:222.50px;font-size:13px;line-height:20px;color:#313c52;left:111.5px;">admin<i style="margin-left:6px">linked</i><span style="margin-left:9px">Story</span><span style="margin-left:5.5px">story 9</span></div>
<div class="a" style="top:250.19px;font-size:11px;line-height:20px;color:#313c52;left:19.59999999999991px;">11/09 09:14</div>
<div class="a" style="left:99px;top:257px;width:6px;height:6px;background:#c4c6cc;border-radius:50%;"></div>
<div class="a" style="top:249.50px;font-size:13px;line-height:20px;color:#313c52;left:111.5px;">admin<i style="margin-left:6px">linked</i><span style="margin-left:9px">Story</span><span style="margin-left:5.5px">story 8</span></div>
<div class="a" style="top:277.19px;font-size:11px;line-height:20px;color:#313c52;left:19.59999999999991px;">11/09 09:14</div>
<div class="a" style="left:99px;top:284px;width:6px;height:6px;background:#c4c6cc;border-radius:50%;"></div>
<div class="a" style="top:276.50px;font-size:13px;line-height:20px;color:#313c52;left:111.5px;">admin<i style="margin-left:6px">linked</i><span style="margin-left:9px">Story</span><span style="margin-left:5.5px">story 5</span></div>
<div class="a" style="top:304.19px;font-size:11px;line-height:20px;color:#313c52;left:19.59999999999991px;">11/09 09:14</div>
<div class="a" style="left:95.5px;top:307.5px;width:13px;height:13px;background:#d9e7ff;border-radius:50%;"></div>
<div class="a" style="left:98px;top:310px;width:8px;height:8px;background:#2e7fff;border-radius:50%;"></div>
<div class="a" style="top:303.50px;font-size:13px;line-height:20px;color:#313c52;left:111.5px;">admin<i style="margin-left:6px">opened</i><span style="margin-left:9px">Build</span><span style="margin-left:5.5px">Build 3</span></div>
<div class="a" style="top:331.19px;font-size:11px;line-height:20px;color:#313c52;left:19.59999999999991px;">11/09 09:14</div>
<div class="a" style="left:99px;top:338px;width:6px;height:6px;background:#c4c6cc;border-radius:50%;"></div>
<div class="a" style="top:330.50px;font-size:13px;line-height:20px;color:#313c52;left:111.5px;">admin<i style="margin-left:6px">linked</i><span style="margin-left:9px">Story</span><span style="margin-left:5.5px">story 8</span></div>
<div class="a" style="top:358.19px;font-size:11px;line-height:20px;color:#313c52;left:19.59999999999991px;">11/09 09:14</div>
<div class="a" style="left:99px;top:365px;width:6px;height:6px;background:#c4c6cc;border-radius:50%;"></div>
<div class="a" style="top:357.50px;font-size:13px;line-height:20px;color:#313c52;left:111.5px;">admin<i style="margin-left:6px">linked</i><span style="margin-left:9px">Story</span><span style="margin-left:5.5px">story 5</span></div>
</div>
<div class="a" style="left:1169px;top:742px;width:396px;height:370px;background:#fff;border-radius:4px;box-shadow:0 1px 2px rgba(0,0,0,.08);"></div>
<div class="a" style="top:753.00px;font-size:13px;line-height:20px;color:#313c52;font-weight:700;left:1188.4px;">Personal Contribution</div>
<div class="a" style="left:1542.25px;top:756.55px;width:2.5px;height:2.5px;background:#979eb0;border-radius:50%;"></div>
<div class="a" style="left:1542.25px;top:761.15px;width:2.5px;height:2.5px;background:#979eb0;border-radius:50%;"></div>
<div class="a" style="left:1542.25px;top:765.75px;width:2.5px;height:2.5px;background:#979eb0;border-radius:50%;"></div>
<div class="a" style="top:800.50px;font-size:13px;line-height:20px;color:#313c52;left:942.0999999999999px;width:600px;text-align:center;">Todos Created</div>
<div class="a" style="top:834.80px;font-size:28px;line-height:20px;color:#313c52;font-weight:700;left:942.0999999999999px;width:600px;text-align:center;letter-spacing:0;transform:scaleY(1.1);">1</div>
<div class="a" style="top:800.50px;font-size:13px;line-height:20px;color:#313c52;left:1067.1999999999998px;width:600px;text-align:center;">UR/Epics Created</div>
<div class="a" style="top:834.80px;font-size:28px;line-height:20px;color:#313c52;font-weight:700;left:1067.1999999999998px;width:600px;text-align:center;letter-spacing:0;transform:scaleY(1.1);">4</div>
<div class="a" style="top:800.50px;font-size:13px;line-height:20px;color:#313c52;left:1192.3px;width:600px;text-align:center;">SR/Stories</div>
<div class="a" style="top:818.50px;font-size:13px;line-height:20px;color:#313c52;left:1192.3px;width:600px;text-align:center;">Created</div>
<div class="a" style="top:853.80px;font-size:28px;line-height:20px;color:#313c52;font-weight:700;left:1192.3px;width:600px;text-align:center;letter-spacing:0;transform:scaleY(1.1);">27</div>
<div class="a" style="top:886.50px;font-size:13px;line-height:20px;color:#313c52;left:942.0999999999999px;width:600px;text-align:center;">Tasks Finished</div>
<div class="a" style="top:920.80px;font-size:28px;line-height:20px;color:#313c52;font-weight:700;left:942.0999999999999px;width:600px;text-align:center;letter-spacing:0;transform:scaleY(1.1);">6</div>
<div class="a" style="top:886.50px;font-size:13px;line-height:20px;color:#313c52;left:1067.1999999999998px;width:600px;text-align:center;">Bugs Created</div>
<div class="a" style="top:920.80px;font-size:28px;line-height:20px;color:#313c52;font-weight:700;left:1067.1999999999998px;width:600px;text-align:center;letter-spacing:0;transform:scaleY(1.1);">5</div>
<div class="a" style="top:886.50px;font-size:13px;line-height:20px;color:#313c52;left:1192.3px;width:600px;text-align:center;">Bugs Resolved</div>
<div class="a" style="top:920.80px;font-size:28px;line-height:20px;color:#313c52;font-weight:700;left:1192.3px;width:600px;text-align:center;letter-spacing:0;transform:scaleY(1.1);">0</div>
<div class="a" style="top:955.50px;font-size:13px;line-height:20px;color:#313c52;left:942.0999999999999px;width:600px;text-align:center;">Cases Created</div>
<div class="a" style="top:989.80px;font-size:28px;line-height:20px;color:#313c52;font-weight:700;left:942.0999999999999px;width:600px;text-align:center;letter-spacing:0;transform:scaleY(1.1);">9</div>
<div class="a" style="top:955.50px;font-size:13px;line-height:20px;color:#313c52;left:1067.1999999999998px;width:600px;text-align:center;">Risks Created</div>
<div class="a" style="top:989.80px;font-size:28px;line-height:20px;color:#313c52;font-weight:700;left:1067.1999999999998px;width:600px;text-align:center;letter-spacing:0;transform:scaleY(1.1);">1</div>
<div class="a" style="top:955.50px;font-size:13px;line-height:20px;color:#313c52;left:1192.3px;width:600px;text-align:center;">Risks Resolved</div>
<div class="a" style="top:989.80px;font-size:28px;line-height:20px;color:#313c52;font-weight:700;left:1192.3px;width:600px;text-align:center;letter-spacing:0;transform:scaleY(1.1);">0</div>
<div class="a" style="top:1024.00px;font-size:13px;line-height:20px;color:#313c52;left:942.0999999999999px;width:600px;text-align:center;">Issues Created</div>
<div class="a" style="top:1058.30px;font-size:28px;line-height:20px;color:#313c52;font-weight:700;left:942.0999999999999px;width:600px;text-align:center;letter-spacing:0;transform:scaleY(1.1);">0</div>
<div class="a" style="top:1024.00px;font-size:13px;line-height:20px;color:#313c52;left:1067.1999999999998px;width:600px;text-align:center;">Issues Resolved</div>
<div class="a" style="top:1058.30px;font-size:28px;line-height:20px;color:#313c52;font-weight:700;left:1067.1999999999998px;width:600px;text-align:center;letter-spacing:0;transform:scaleY(1.1);">0</div>
<div class="a" style="top:1024.00px;font-size:13px;line-height:20px;color:#313c52;left:1192.3px;width:600px;text-align:center;">Docs Created</div>
<div class="a" style="top:1058.30px;font-size:28px;line-height:20px;color:#313c52;font-weight:700;left:1192.3px;width:600px;text-align:center;letter-spacing:0;transform:scaleY(1.1);">0</div>
</body></html>
